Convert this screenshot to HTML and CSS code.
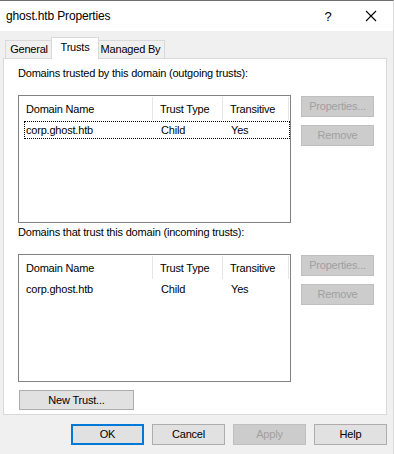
FILE: index.html
```html
<!DOCTYPE html>
<html>
<head>
<meta charset="utf-8">
<link rel="stylesheet" href="styles.css">
</head>
<body>
<div class="window">
  <div class="titlebar">
    <div class="title">ghost.htb Properties</div>
    <div class="controls">
      <span class="help-q">?</span>
      <svg class="close-x" width="12" height="12" viewBox="0 0 12 12"><path d="M1 1 L11 11 M11 1 L1 11" stroke="#000" stroke-width="1.1" fill="none"/></svg>
    </div>
  </div>
  <div class="body">
    <div class="tabs">
      <div class="tab t-general">General</div>
      <div class="tab active t-trusts">Trusts</div>
      <div class="tab t-managed">Managed By</div>
    </div>
    <div class="panel">
      <div class="section">
        <div class="label">Domains trusted by this domain (outgoing trusts):</div>
        <div class="row">
          <div class="listbox">
            <div class="lv-head">
              <div class="c1">Domain Name</div>
              <div class="c2">Trust Type</div>
              <div class="c3">Transitive</div>
            </div>
            <div class="lv-row focused">
              <div class="c1">corp.ghost.htb</div>
              <div class="c2">Child</div>
              <div class="c3">Yes</div>
            </div>
          </div>
          <div class="side">
            <div class="btn disabled">Properties...</div>
            <div class="btn disabled">Remove</div>
          </div>
        </div>
      </div>
      <div class="section">
        <div class="label">Domains that trust this domain (incoming trusts):</div>
        <div class="row">
          <div class="listbox">
            <div class="lv-head">
              <div class="c1">Domain Name</div>
              <div class="c2">Trust Type</div>
              <div class="c3">Transitive</div>
            </div>
            <div class="lv-row">
              <div class="c1">corp.ghost.htb</div>
              <div class="c2">Child</div>
              <div class="c3">Yes</div>
            </div>
          </div>
          <div class="side">
            <div class="btn disabled">Properties...</div>
            <div class="btn disabled">Remove</div>
          </div>
        </div>
      </div>
      <div class="btn newtrust">New Trust...</div>
    </div>
    <div class="footer">
      <div class="btn default">OK</div>
      <div class="btn">Cancel</div>
      <div class="btn disabled">Apply</div>
      <div class="btn">Help</div>
    </div>
  </div>
</div>
</body>
</html>
```

FILE: styles.css
```css
* { box-sizing: border-box; }
html, body {
  margin: 0;
  padding: 0;
  width: 394px;
  height: 454px;
  overflow: hidden;
  background: #f0f0f0;
  font-family: "Liberation Sans", Arial, sans-serif;
  font-size: 11px;
  letter-spacing: -0.2px;
  color: #000;
}
.window {
  width: 394px;
  height: 454px;
  border-top: 1px solid #6e6e6e;
  border-right: 1px solid #dadada;
  display: flex;
  flex-direction: column;
}
.titlebar {
  height: 30px;
  background: #fff;
  display: flex;
  align-items: center;
  justify-content: space-between;
  padding-left: 6px;
}
.title {
  font-size: 12px;
  letter-spacing: -0.15px;
}
.controls {
  display: flex;
  align-items: center;
  height: 100%;
}
.help-q {
  width: 46px;
  text-align: center;
  font-size: 13px;
  margin-right: -4px;
}
.close-x {
  margin: 0 16px 0 18px;
}
.body {
  flex: 1;
  padding: 6px 0 0 3px;
  display: flex;
  flex-direction: column;
}
.tabs {
  display: flex;
  align-items: flex-end;
  height: 21px;
  padding-left: 2px;
  position: relative;
  z-index: 1;
}
.tab {
  height: 18px;
  border: 1px solid #d9d9d9;
  border-bottom: none;
  background: #f0f0f0;
  text-align: center;
  line-height: 17px;
}
.t-general { width: 48px; }
.t-managed { width: 69px; }
.tab + .tab { margin-left: -1px; }
.tab.active {
  width: 48px;
  height: 22px;
  background: #fff;
  margin-left: -2px;
  margin-right: -2px;
  line-height: 19px;
  position: relative;
  z-index: 2;
  margin-bottom: -1px;
}
.panel {
  width: 384px;
  height: 357px;
  background: #fff;
  border: 1px solid #d9d9d9;
  padding: 7px 0 0 14px;
  display: flex;
  flex-direction: column;
}
.section .label {
  height: 14px;
  line-height: 14px;
}
.section + .section { margin-top: 2px; }
.row {
  display: flex;
  margin-top: 15px;
}
.listbox {
  width: 273px;
  height: 128px;
  border: 1px solid #828282;
  background: #fff;
  padding-top: 1px;
}
.lv-head, .lv-row {
  display: grid;
  grid-template-columns: 134px 70px 66px;
}
.lv-head {
  height: 24px;
  line-height: 24px;
}
.lv-head > div {
  padding-left: 7px;
  border-right: 1px solid #e5e5e5;
  height: 23px;
}
.lv-row {
  height: 18px;
  line-height: 16px;
  margin-left: 5px;
  grid-template-columns: 129px 70px 66px;
  border: 1px dotted transparent;
}
.lv-row > div { padding-left: 1px; }
.lv-row.focused { border: 1px dotted #000; }
.lv-row .c2, .lv-row .c3 { padding-left: 7px; }
.side {
  margin-left: 10px;
  padding-top: 1px;
  display: flex;
  flex-direction: column;
  gap: 8px;
}
.btn {
  width: 73px;
  height: 21px;
  border: 1px solid #adadad;
  background: #e1e1e1;
  text-align: center;
  line-height: 19px;
}
.btn.disabled {
  background: #cccccc;
  border-color: #bfbfbf;
  color: #a0a0a0;
}
.btn.default {
  border: 2px solid #0078d7;
  line-height: 17px;
}
.btn.newtrust {
  width: 115px;
  height: 20px;
  line-height: 18px;
  margin-top: 8px;
  margin-left: 1px;
}
.footer {
  display: flex;
  justify-content: flex-end;
  gap: 8px;
  padding: 9px 6px 0 0;
}
```
